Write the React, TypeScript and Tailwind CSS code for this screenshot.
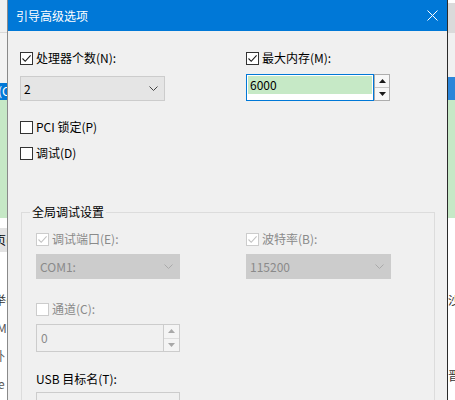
import React from "react";

const FONT = "font-['Noto_Sans_CJK_SC','Noto_Sans',sans-serif]";

function Box({ checked, disabled }: { checked?: boolean; disabled?: boolean }) {
  return (
    <span
      className={
        disabled
          ? "w-[13px] h-[13px] border border-[#cccccc] bg-white flex items-center justify-center shrink-0"
          : "w-[13px] h-[13px] border border-[#333333] bg-white flex items-center justify-center shrink-0"
      }
    >
      {checked && (
        <svg width="11" height="11" viewBox="0 0 11 11">
          <path
            d="M1.5 5.5 L4.2 8.3 L9.6 2.3"
            fill="none"
            stroke={disabled ? "#c2c2c2" : "#1a1a1a"}
            strokeWidth="1.1"
          />
        </svg>
      )}
    </span>
  );
}

function CheckRow({
  label,
  checked,
  disabled,
  boxDisabled,
}: {
  label: string;
  checked?: boolean;
  disabled?: boolean;
  boxDisabled?: boolean;
}) {
  return (
    <div className="h-[16px] flex items-center gap-[3px]">
      <Box checked={checked} disabled={boxDisabled ?? disabled} />
      <span
        className={
          disabled
            ? "text-[12px] leading-[16px] text-[#8a8a8a] whitespace-nowrap"
            : "text-[12px] leading-[16px] text-black whitespace-nowrap"
        }
      >
        {label}
      </span>
    </div>
  );
}

function Chevron({ color }: { color: string }) {
  return (
    <svg width="9" height="5" viewBox="0 0 9 5">
      <path d="M0.5 0.5 L4.5 4.5 L8.5 0.5" fill="none" stroke={color} strokeWidth="1" />
    </svg>
  );
}

function Spin({ disabled }: { disabled?: boolean }) {
  const c = disabled ? "#a8a8a8" : "#1a1a1a";
  return (
    <div
      className={
        disabled
          ? "w-[17px] h-full border border-[#cccccc] bg-[#f4f4f4] flex flex-col"
          : "w-[16px] h-full border border-[#adadad] bg-[#f7f7f7] flex flex-col"
      }
    >
      <div
        className={
          disabled
            ? "flex-1 flex items-center justify-center border-b border-[#dddddd]"
            : "flex-1 flex items-center justify-center border-b border-[#c8c8c8]"
        }
      >
        <svg width="7" height="4" viewBox="0 0 7 4">
          <path d="M0 4 L3.5 0 L7 4 Z" fill={c} />
        </svg>
      </div>
      <div className="flex-1 flex items-center justify-center">
        <svg width="7" height="4" viewBox="0 0 7 4">
          <path d="M0 0 L3.5 4 L7 0 Z" fill={c} />
        </svg>
      </div>
    </div>
  );
}

function LeftStrip() {
  return (
    <div className="w-[7px] h-[400px] overflow-hidden flex flex-col bg-white text-[12px] leading-[16px]">
      <div className="h-[33px] bg-[#f0f0f0] border-b border-[#d9d9d9]" />
      <div className="h-[50px] bg-[#f3f3f3]" />
      <div className="h-[17px] bg-[#0078d7] text-white whitespace-nowrap ml-[-2px]">(C</div>
      <div className="h-[118px] bg-[#c6e8c6]" />
      <div className="h-[10px] bg-white" />
      <div className="h-[24px] bg-[#e3e3e3] whitespace-nowrap ml-[-6px] pt-[4px] text-black">页(</div>
      <div className="h-[40px] bg-white" />
      <div className="h-[20px] whitespace-nowrap ml-[-6px] text-[#333]">举(</div>
      <div className="h-[20px] mt-[8px] whitespace-nowrap ml-[-3px] text-[#555]">M</div>
      <div className="h-[20px] mt-[8px] whitespace-nowrap ml-[-7px] text-[#555]">外</div>
      <div className="h-[20px] mt-[8px] whitespace-nowrap ml-[-2px] text-[#555]">e</div>
    </div>
  );
}

function RightStrip() {
  return (
    <div className="w-[7px] h-[400px] overflow-hidden flex flex-col bg-white text-[12px] leading-[16px]">
      <div className="h-[3px] bg-white" />
      <div className="h-[30px] bg-[#dadada]" />
      <div className="h-[44px] bg-[#f0f0f0]" />
      <div className="h-[23px] bg-[#2b85d9]" />
      <div className="h-[118px] bg-[#c6e8c6]" />
      <div className="h-[74px] bg-white" />
      <div className="h-[16px] whitespace-nowrap text-[#333]">沙</div>
      <div className="h-[60px] bg-white" />
      <div className="h-[16px] whitespace-nowrap text-[#333]">晋</div>
    </div>
  );
}

export default function App() {
  return (
    <div className={`w-[455px] h-[400px] overflow-hidden flex bg-white ${FONT}`}>
      <LeftStrip />
      <div className="w-[441px] h-[400px] border-l border-r border-l-[#8a8a8a] border-r-[#2a2a2a] flex flex-col overflow-hidden">
        <div className="h-[31px] shrink-0 bg-[#0078d7] flex items-center justify-between pl-[8px] pr-[9px]">
          <span className="text-white text-[12px] leading-[16px]">引导高级选项</span>
          <svg width="11" height="11" viewBox="0 0 11 11">
            <path d="M0.5 0.5 L10.5 10.5 M10.5 0.5 L0.5 10.5" stroke="white" strokeWidth="1" />
          </svg>
        </div>
        <div className="flex-1 bg-[#f0f0f0] pl-[12px] pt-[19px] text-black">
          <div className="grid grid-cols-[226px_1fr]">
            <div className="flex flex-col">
              <CheckRow label="处理器个数(N):" checked />
              <div className="mt-[10px] w-[145px] h-[25px] bg-[#e5e5e5] border border-[#cccccc] flex items-center justify-between pl-[3px] pr-[6px]">
                <span className="text-[12px] leading-[16px]">2</span>
                <Chevron color="#444444" />
              </div>
            </div>
            <div className="flex flex-col">
              <CheckRow label="最大内存(M):" checked />
              <div className="mt-[8px] h-[27px] flex">
                <div className="w-[128px] h-[27px] border border-[#0078d7] bg-white p-[1px]">
                  <div className="h-[18px] bg-[#c6e9c6] flex items-center pl-[2px] text-[12px] leading-[16px]">
                    6000
                  </div>
                </div>
                <Spin />
              </div>
            </div>
          </div>

          <div className="mt-[18px]">
            <CheckRow label="PCI 锁定(P)" />
          </div>
          <div className="mt-[10px]">
            <CheckRow label="调试(D)" />
          </div>

          <fieldset className="mt-[43px] ml-[1px] w-[414px] border border-b-0 border-[#dcdcdc] pl-[14px] pr-0 pb-[20px]">
            <legend className="ml-[-6px] px-[2px] text-[12px] leading-[16px] text-black">全局调试设置</legend>
            <div className="grid grid-cols-[210px_1fr] mt-[11px]">
              <div className="flex flex-col">
                <CheckRow label="调试端口(E):" checked disabled />
                <div className="mt-[7px] w-[144px] h-[25px] bg-[#cccccc] border border-[#cccccc] flex items-center justify-between pl-[3px] pr-[6px]">
                  <span className="text-[12px] leading-[16px] text-[#8a8a8a]">COM1:</span>
                  <Chevron color="#aaaaaa" />
                </div>
              </div>
              <div className="flex flex-col">
                <CheckRow label="波特率(B):" checked disabled />
                <div className="mt-[7px] w-[145px] h-[25px] bg-[#cccccc] border border-[#cccccc] flex items-center justify-between pl-[3px] pr-[6px]">
                  <span className="text-[12px] leading-[16px] text-[#8a8a8a]">115200</span>
                  <Chevron color="#aaaaaa" />
                </div>
              </div>
            </div>

            <div className="mt-[22px]">
              <CheckRow label="通道(C):" disabled />
            </div>
            <div className="mt-[7px] w-[144px] h-[28px] flex">
              <div className="flex-1 h-full border border-r-0 border-[#cccccc] bg-[#f0f0f0] flex items-center pl-[4px]">
                <span className="text-[12px] leading-[16px] text-[#8a8a8a]">0</span>
              </div>
              <Spin disabled />
            </div>

            <div className="mt-[19px] h-[16px] flex items-center">
              <span className="text-[12px] leading-[16px] text-black">USB 目标名(T):</span>
            </div>
            <div className="mt-[5px] w-[144px] h-[25px] border border-[#cccccc] bg-[#f0f0f0]" />
          </fieldset>
        </div>
      </div>
      <RightStrip />
    </div>
  );
}
